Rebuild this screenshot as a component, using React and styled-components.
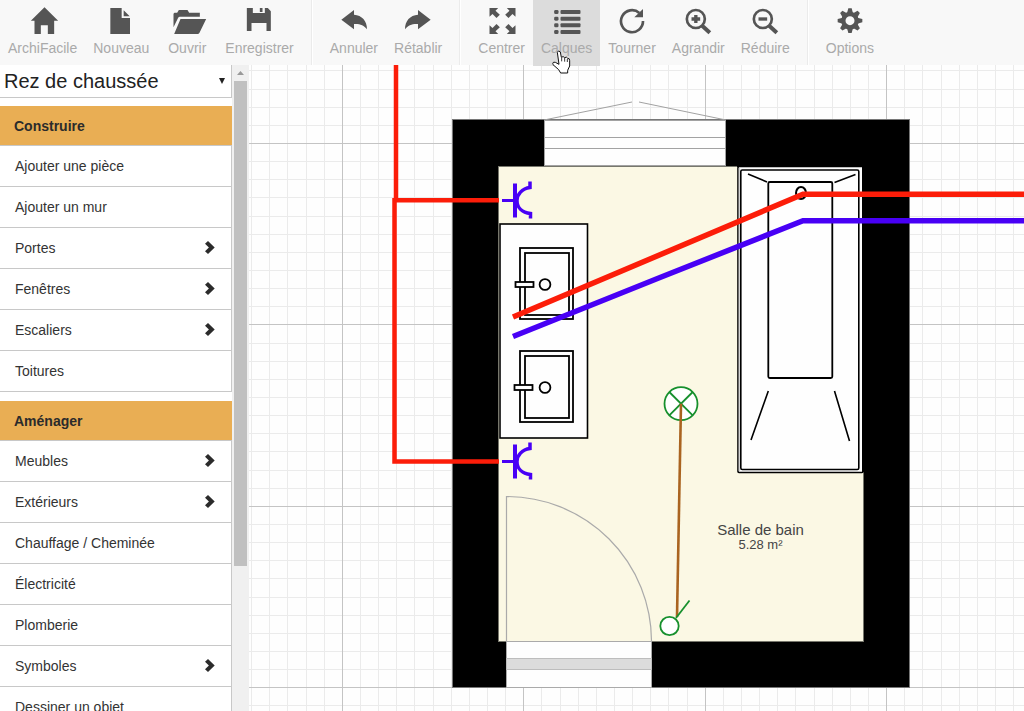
import React from "react";
import styled, { createGlobalStyle } from "styled-components";

const GlobalStyle = createGlobalStyle`
  * { box-sizing: border-box; }
  body {
    margin: 0;
    overflow: hidden;
    background: #fff;
    color: #333;
    font-family: "Liberation Sans", Arial, sans-serif;
    font-size: 14px;
  }
`;

const Page = styled.div`
  display: flex;
  flex-direction: column;
  height: 100vh;
  overflow: hidden;
`;

const Toolbar = styled.nav`
  display: flex;
  flex: none;
  height: 65px;
  background: #f8f8f8;
`;

const ToolGroup = styled.div`
  display: flex;
  height: 66px;
  padding-right: 9px;

  & + & {
    padding-left: 10px;
    border-left: 1px solid #ebebeb;
    box-shadow: inset 1px 0 #fff;
  }
`;

const ToolButton = styled.button`
  position: relative;
  z-index: 1;
  display: flex;
  flex-direction: column;
  align-items: center;
  gap: 5px;
  height: 66px;
  min-width: ${(p) => p.$minWidth || 0}px;
  padding: 7px 8px 0;
  border: 0;
  background: ${(p) => (p.$active ? "#dcdcdc" : "transparent")};
  color: #aaa;
  font: 14px/16px "Liberation Sans", Arial, sans-serif;
  white-space: nowrap;
`;

const ToolIcon = styled.svg`
  display: block;
  flex: none;
  width: 34px;
  height: 28px;
  margin: 0 -8px;
  overflow: visible;
  fill: #555;
`;

const Pointer = styled.svg`
  position: absolute;
  left: 19px;
  top: 49px;
  width: 19px;
  height: 26px;
  overflow: visible;
`;

const Workspace = styled.div`
  display: flex;
  flex: 1;
  min-height: 0;
`;

const Sidebar = styled.aside`
  flex: none;
  width: 232px;
  overflow: hidden;
`;

const FloorPicker = styled.div`
  display: flex;
  position: relative;
  height: 33px;
  margin-bottom: 8px;
`;

const FloorSelect = styled.select`
  width: 100%;
  appearance: none;
  padding: 0 24px 0 4px;
  border: 0;
  border-right: 1px solid #c8c8c8;
  border-bottom: 1px solid #c8c8c8;
  border-radius: 0;
  background: #fff;
  color: #222;
  font: 20px/32px "Liberation Sans", Arial, sans-serif;
`;

const SelectArrow = styled.svg`
  position: absolute;
  right: 7px;
  top: 13px;
  width: 6px;
  height: 6px;
  pointer-events: none;
`;

const Section = styled.section`
  margin-bottom: 9px;
`;

const SectionTitle = styled.h2`
  height: 40px;
  margin: 0;
  padding-left: 14px;
  border-bottom: 1px solid #c8c8c8;
  background: #e9ae54;
  color: #2b2b2b;
  font-size: 14px;
  font-weight: bold;
  line-height: 40px;
`;

const ItemList = styled.ul`
  margin: 0;
  padding: 0;
  list-style: none;
`;

const ItemLink = styled.a`
  display: flex;
  align-items: center;
  justify-content: space-between;
  height: 41px;
  padding: 0 16px 0 15px;
  border-right: 1px solid #c8c8c8;
  border-bottom: 1px solid #c8c8c8;
  background: #fff;
  color: #333;
  line-height: 40px;
  text-decoration: none;
`;

const Chevron = styled.svg`
  width: 10px;
  height: 15px;
  fill: #2b2b2b;
`;

const ScrollTrack = styled.div`
  display: flex;
  flex: none;
  flex-direction: column;
  align-items: center;
  width: 17px;
  background: #f0f0f0;
`;

const ScrollArrow = styled.svg`
  flex: none;
  width: 7px;
  height: 16px;
`;

const ScrollThumb = styled.div`
  width: 13px;
  height: 75%;
  background: #c0c0c0;
`;

const Canvas = styled.main`
  flex: 1;
  min-width: 0;
  overflow: hidden;
  background: #fefefe;
`;

const Plan = styled.svg`
  display: block;
  width: 100%;
  height: 100%;
  font-family: "Liberation Sans", Arial, sans-serif;
`;

const arrowPath =
  "M94 59 L132 30 V44 C156 46 171 62 171 88 C162 75 149 71 132 72 V88Z";
const cornerArrow = "M537 24H563L555 32L568 44L558 54L546 42L537 50Z";

const icons = {
  home: {
    x: 76.5,
    art: <path d="M132 22L173 62H161V102H142V76H121V102H102V62H91Z" />,
  },
  file: {
    x: 312,
    art: <path d="M331 24H365V54H390V102H331ZM371 31L389 49H371Z" />,
  },
  folder: {
    x: 511.5,
    art: (
      <path d="M522 41L525 38H533L538 30H564L569 38H601V50H541Q538 50 536 53L522 82ZM543 57H620L600 98Q598 102 594 102H524Z" />
    ),
  },
  save: {
    x: 727.5,
    art: <path d="M739 24H757V39H793V24H802L811 34V93H798V69H753V93H739ZM778 24H786V36H778Z" />,
  },
  undo: { x: 81, art: <path d={arrowPath} /> },
  redo: {
    x: 273,
    art: <path d={arrowPath} transform="translate(456 0) scale(-1 1)" />,
  },
  center: {
    x: 523.5,
    art: (
      <>
        <path d={cornerArrow} />
        <path d={cornerArrow} transform="translate(1152 0) scale(-1 1)" />
        <path d={cornerArrow} transform="translate(0 126) scale(1 -1)" />
        <path d={cornerArrow} transform="translate(1152 126) scale(-1 -1)" />
      </>
    ),
  },
  layers: {
    x: 718.5,
    art: [30, 50, 70, 90].map((y) => (
      <g key={y}>
        <rect x="731" y={y} width="13" height="12" rx="4" />
        <rect x="750" y={y} width="60" height="12" rx="3" />
      </g>
    )),
  },
  rotate: {
    x: 45,
    art: (
      <>
        <path d="M129 63A33 33 0 1 1 118 39" fill="none" stroke="#555" strokeWidth="8" />
        <path d="M129 27V52H103Z" />
      </>
    ),
  },
  zoomIn: {
    x: 244.5,
    art: (
      <>
        <circle cx="289" cy="57" r="27" fill="none" stroke="#555" strokeWidth="8" />
        <path d="M308 77L331 98" stroke="#555" strokeWidth="12" />
        <path d="M284 45H294V52H302V62H294V69H284V62H276V52H284Z" />
      </>
    ),
  },
  zoomOut: {
    x: 445.5,
    art: (
      <>
        <circle cx="490" cy="57" r="27" fill="none" stroke="#555" strokeWidth="8" />
        <path d="M509 77L532 98" stroke="#555" strokeWidth="12" />
        <path d="M477 52H503V62H477Z" />
      </>
    ),
  },
  gear: {
    x: 699,
    art: (
      <>
        <circle cx="750" cy="62" r="20" fill="none" stroke="#555" strokeWidth="13" />
        {[0, 45, 90, 135, 180, 225, 270, 315].map((a) => (
          <path key={a} d="M741 40L745 25H755L759 40Z" transform={`rotate(${a} 750 62)`} />
        ))}
      </>
    ),
  },
};

const toolGroups = [
  [
    { label: "ArchiFacile", icon: "home" },
    { label: "Nouveau", icon: "file" },
    { label: "Ouvrir", icon: "folder", minWidth: 60 },
    { label: "Enregistrer", icon: "save" },
  ],
  [
    { label: "Annuler", icon: "undo" },
    { label: "Rétablir", icon: "redo" },
  ],
  [
    { label: "Centrer", icon: "center" },
    { label: "Calques", icon: "layers", active: true },
    { label: "Tourner", icon: "rotate" },
    { label: "Agrandir", icon: "zoomIn" },
    { label: "Réduire", icon: "zoomOut" },
  ],
  [{ label: "Options", icon: "gear" }],
];

const sections = [
  {
    title: "Construire",
    items: [
      ["Ajouter une pièce"],
      ["Ajouter un mur"],
      ["Portes", true],
      ["Fenêtres", true],
      ["Escaliers", true],
      ["Toitures"],
    ],
  },
  {
    title: "Aménager",
    items: [
      ["Meubles", true],
      ["Extérieurs", true],
      ["Chauffage / Cheminée"],
      ["Électricité"],
      ["Plomberie"],
      ["Symboles", true],
      ["Dessiner un objet"],
    ],
  },
];

function Tool({ label, icon, active, minWidth }) {
  const { x, art } = icons[icon];
  return (
    <ToolButton type="button" $active={active} $minWidth={minWidth}>
      <ToolIcon viewBox={`${x} 21 102 84`} fillRule="evenodd" aria-hidden="true">
        {art}
      </ToolIcon>
      {label}
      {active && <HandPointer />}
    </ToolButton>
  );
}

function HandPointer() {
  return (
    <Pointer viewBox="726 147 57 78" aria-hidden="true">
      <path
        d="M742 157Q745 149 751 156L754 172Q760 167 764 173Q770 169 773 175Q779 174 779 182V198L773 211V219H752L746 209L729 194Q726 185 736 187L747 193Z"
        fill="#fff"
        stroke="#111"
        strokeWidth="3"
        strokeLinejoin="round"
      />
      <path d="M755 173V184M764 174V185M772 177V186" stroke="#111" strokeWidth="2.5" />
    </Pointer>
  );
}

const STEP = 18.14;

function Grid() {
  const lines = (from, count, draw) =>
    Array.from({ length: count }, (_, i) => i - 10)
      .map((k) => ({ k, at: Math.floor(from + k * STEP) + 0.5 }))
      .map(draw);
  const minor = [];
  const major = [];
  lines(342.4, 220, ({ k, at }) => (k % 10 ? minor : major).push(`M${at} 0V3000`));
  lines(143.5, 180, ({ k, at }) => (k % 10 ? minor : major).push(`M0 ${at}H4000`));
  return (
    <g shapeRendering="crispEdges">
      <path d={minor.join("")} stroke="#ebebeb" />
      <path d={major.join("")} stroke="#c4c4c4" />
    </g>
  );
}

function Basin({ x, y, tapX }) {
  return (
    <g fill="#fefefe" stroke="#000" strokeWidth="1.8">
      <rect x={x} y={y} width="53" height="71" />
      <rect x={x + 5} y={y + 5} width="44" height="62" />
      <rect x={tapX} y={y + 34} width="18" height="5" />
      <circle cx={x + 25} cy={y + 36.5} r="5.4" />
    </g>
  );
}

function Socket({ y }) {
  return (
    <g transform={`translate(0 ${y})`} fill="none" stroke="#4800f5">
      <path d="M502 0H515" strokeWidth="3" />
      <path d="M515 -17V17" strokeWidth="4" />
      <path d="M530 -19V-13C522 -12 517 -6 517 0C517 7 522 12 530.5 13V18" strokeWidth="3.5" />
    </g>
  );
}

function FloorPlan() {
  return (
    <Plan role="img" aria-label="Plan de la salle de bain">
      <g transform="translate(-249 -65)">
        <Grid />

        <rect x="452.5" y="119.5" width="457" height="568" fill="#000" stroke="#777" />
        <rect x="498.5" y="166.5" width="365" height="475" fill="#fbf8e4" stroke="#77776c" />

        <g fill="none" stroke="#a2a2a2">
          <path d="M544 120L632 102M639 102L726 120" />
          <rect x="544.5" y="120.5" width="181" height="45" fill="#fefefe" strokeWidth="1" />
          <path d="M544 137.5H726M544 148.5H726" />
        </g>

        <g fill="none" stroke="#aaa">
          <rect x="506.5" y="641.5" width="145" height="46" fill="#fefefe" />
          <rect x="506.5" y="658.5" width="145" height="11" fill="#dcdcdc" stroke="#bdbdbd" />
          <path d="M506.5 641V496.5A145 145 0 0 1 651.5 641" strokeWidth="1.2" />
        </g>

        <rect x="500" y="224" width="87.5" height="214" fill="#fefefe" stroke="#000" strokeWidth="1.6" />
        <Basin x={520} y={248} tapX={515.5} />
        <Basin x={520} y={351} tapX={514.5} />

        <g fill="#fefefe" stroke="#000" strokeWidth="1.6">
          <rect x="738" y="166.5" width="125" height="306" rx="1" />
          <path d="M737 166.2H864" stroke="#000" strokeWidth="1.6" />
          <path d="M863 166V472" stroke="#000" strokeWidth="2" />
          <path d="M739 168V471" stroke="#aaa" strokeWidth="1" />
          <rect x="740.8" y="170" width="118" height="299.5" rx="1.5" />
          <rect x="768.3" y="182" width="64" height="196" rx="1.5" strokeWidth="1.8" />
          <path d="M748 174L767 182M834.5 182.5L855.5 174.5M768.3 391L751 440M834.5 391L849.5 441" />
          <ellipse cx="801" cy="193" rx="5" ry="6" strokeWidth="2" />
        </g>

        <g fill="none">
          <path d="M396 0V200" stroke="#fc1d09" strokeWidth="4.5" />
          <path d="M499 461.5H394.5V200.3H499" stroke="#fc1d09" strokeWidth="4.5" />
          <path d="M513 317L803 194.2H4000" stroke="#fc1d09" strokeWidth="5.5" />
          <path d="M513 336.5L660 277.5L803 220.8H4000" stroke="#4800f5" strokeWidth="5.5" />
        </g>
        <Socket y={200.5} />
        <Socket y={461.5} />

        <g fill="#fff" stroke="#17902d" strokeWidth="1.8">
          <circle cx="681" cy="403.7" r="16.5" />
          <path d="M669.3 392L692.7 415.4M692.7 392L669.3 415.4" />
          <path d="M681 403.7L677 617" stroke="#aa6420" strokeWidth="2.6" />
          <path d="M676 618L689.5 600.5" />
          <circle cx="669.5" cy="626" r="9.2" />
        </g>

        <g fill="#444" textAnchor="middle">
          <text x="760.5" y="535" fontSize="15">Salle de bain</text>
          <text x="760.5" y="549" fontSize="13">5.28 m²</text>
        </g>
      </g>
    </Plan>
  );
}

export default function App() {
  return (
    <Page>
      <GlobalStyle />
      <Toolbar aria-label="Outils">
        {toolGroups.map((group, i) => (
          <ToolGroup key={i}>
            {group.map((tool) => (
              <Tool key={tool.label} {...tool} />
            ))}
          </ToolGroup>
        ))}
      </Toolbar>
      <Workspace>
        <Sidebar>
          <FloorPicker>
            <FloorSelect aria-label="Étage" defaultValue="rdc">
              <option value="rdc">Rez de chaussée</option>
            </FloorSelect>
            <SelectArrow viewBox="0 0 6 6" aria-hidden="true">
              <path d="M0 0H6L3 6Z" fill="#222" />
            </SelectArrow>
          </FloorPicker>
          {sections.map(({ title, items }) => (
            <Section key={title}>
              <SectionTitle>{title}</SectionTitle>
              <ItemList>
                {items.map(([label, expandable]) => (
                  <li key={label}>
                    <ItemLink href="#">
                      {label}
                      {expandable && (
                        <Chevron viewBox="0 0 10 15" aria-hidden="true">
                          <path d="M3 0L9.7 6.5L3 13L0 10.3L3.9 6.5L0 2.7Z" />
                        </Chevron>
                      )}
                    </ItemLink>
                  </li>
                ))}
              </ItemList>
            </Section>
          ))}
        </Sidebar>
        <ScrollTrack aria-hidden="true">
          <ScrollArrow viewBox="0 0 7 16">
            <path d="M0 10L3.5 6L7 10Z" fill="#999" />
          </ScrollArrow>
          <ScrollThumb />
        </ScrollTrack>
        <Canvas>
          <FloorPlan />
        </Canvas>
      </Workspace>
    </Page>
  );
}
